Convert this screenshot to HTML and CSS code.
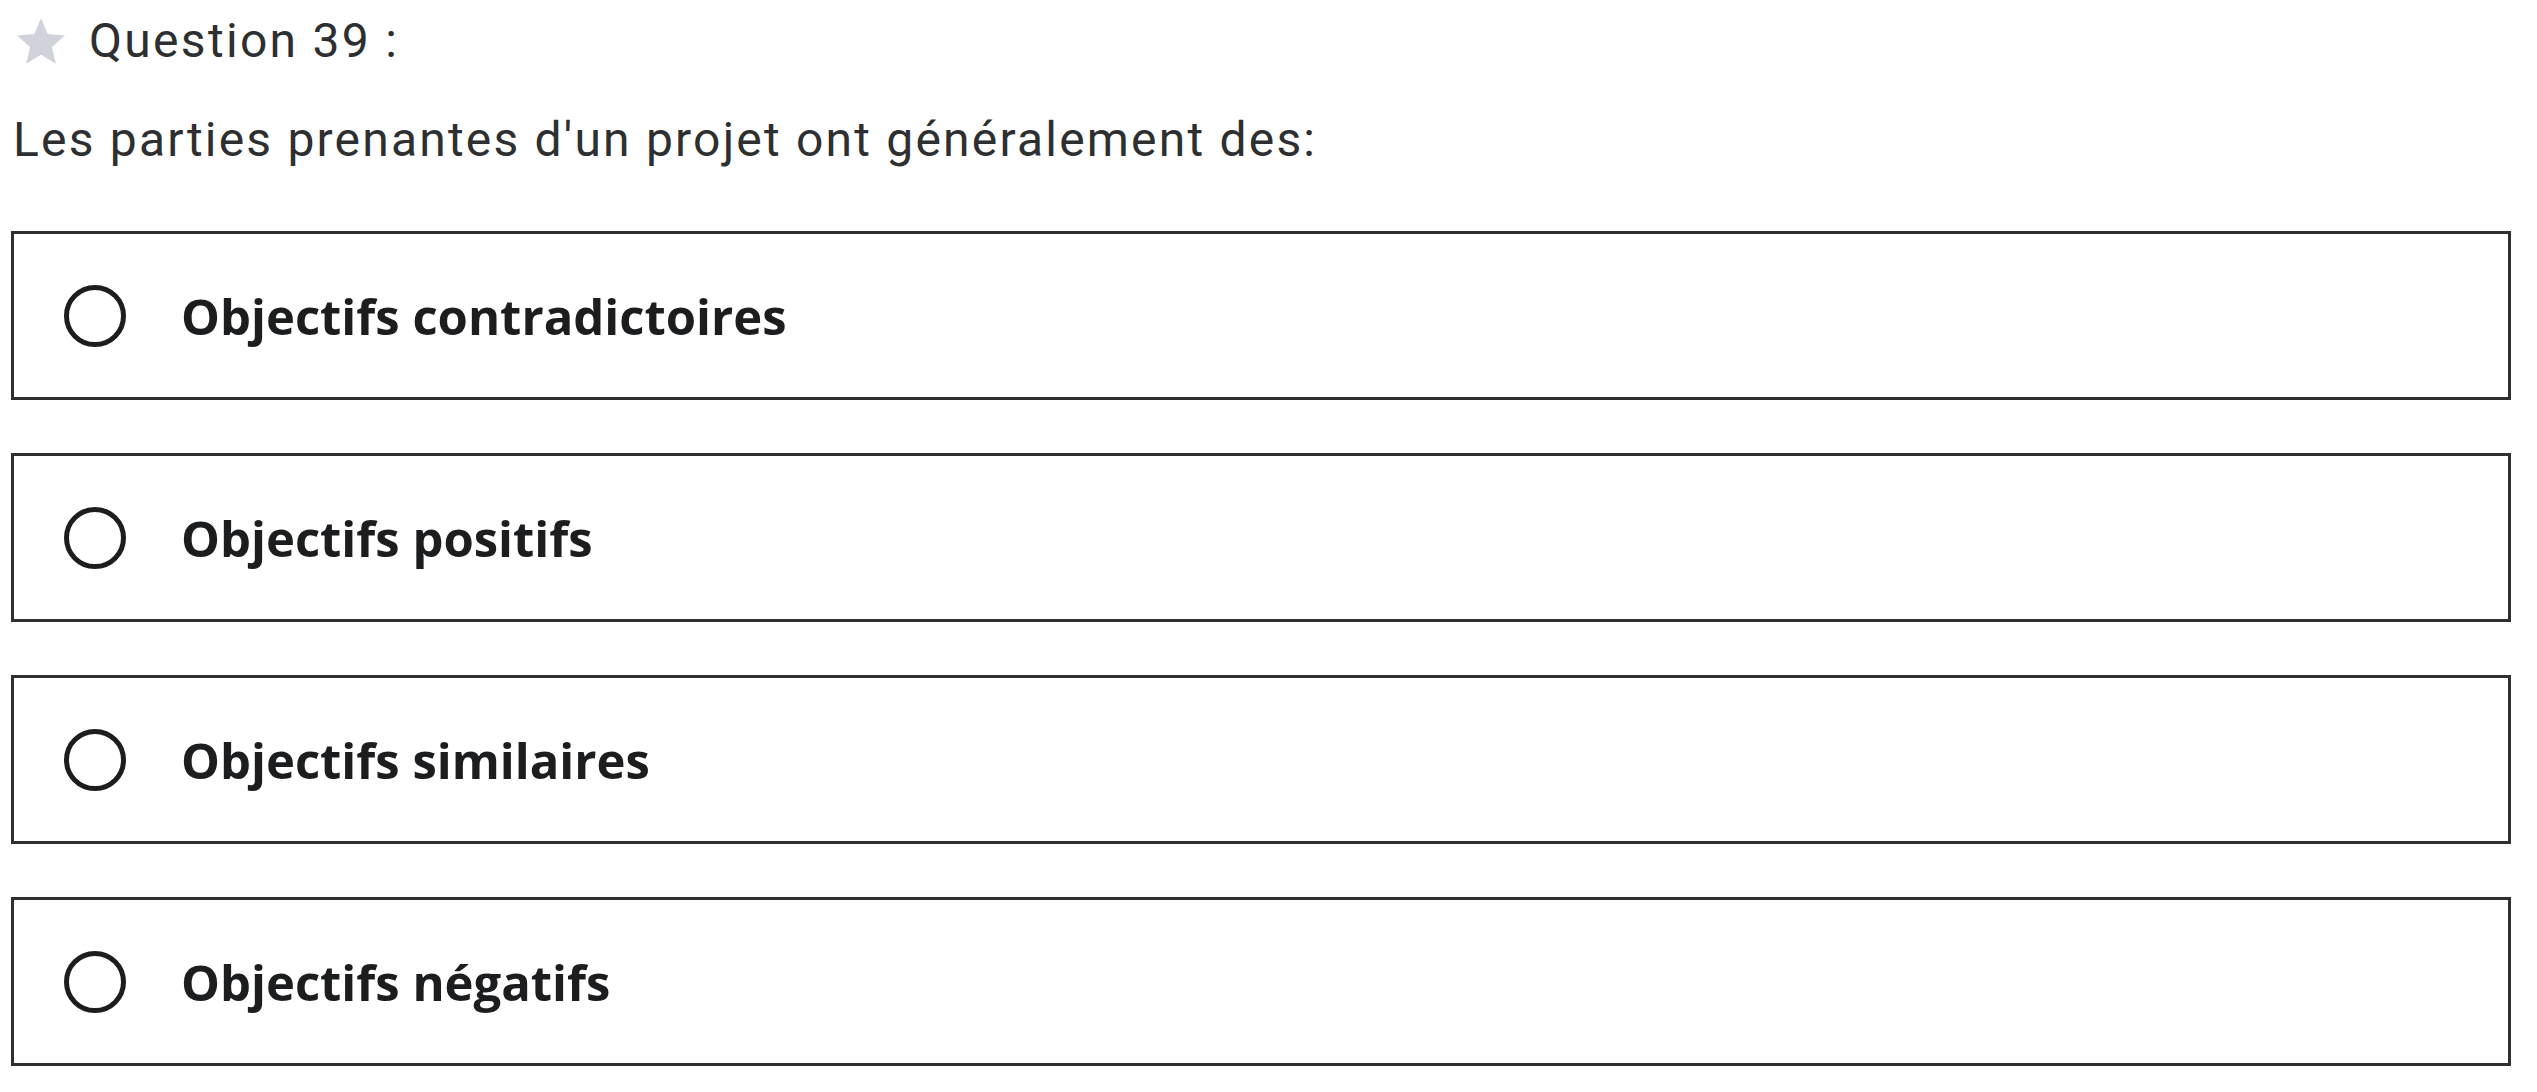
FILE: index.html
```html
<!DOCTYPE html>
<html lang="fr">
<head>
<meta charset="utf-8">
<title>Question 39</title>
<link rel="stylesheet" href="styles.css">
</head>
<body>
<div class="page">
  <div class="q-header">
    <svg class="star" viewBox="2 2 20 19" aria-hidden="true"><path d="M12 17.27L18.18 21l-1.64-7.03L22 9.24l-7.19-.61L12 2 9.19 8.63 2 9.24l5.46 4.73L5.82 21z"/></svg>
    <span class="q-title">Question 39 :</span>
  </div>
  <p class="q-text">Les parties prenantes d'un projet ont généralement des:</p>
  <div class="options">
    <div class="option"><span class="radio"></span><span class="label">Objectifs contradictoires</span></div>
    <div class="option"><span class="radio"></span><span class="label">Objectifs positifs</span></div>
    <div class="option"><span class="radio"></span><span class="label">Objectifs similaires</span></div>
    <div class="option"><span class="radio"></span><span class="label">Objectifs négatifs</span></div>
  </div>
</div>
</body>
</html>
```
FILE: styles.css
```css
html, body {
  margin: 0;
  padding: 0;
  background: #ffffff;
}

.page {
  padding: 13px 26px 0 11px;
  font-family: Roboto, "Liberation Sans", sans-serif;
  color: #2d2f31;
}

.q-header {
  display: flex;
  align-items: center;
  height: 56px;
}

.star {
  width: 48px;
  height: 46px;
  margin-left: 6px;
  margin-right: 24px;
  fill: #d1d3da;
}

.q-title {
  font-size: 48px;
  line-height: 56px;
  letter-spacing: 2.3px;
}

.q-text {
  margin: 43px 0 0 2px;
  font-size: 48px;
  line-height: 56px;
  letter-spacing: 2.2px;
}

.options {
  display: flex;
  flex-direction: column;
  gap: 53px;
  margin-top: 63px;
}

.option {
  display: flex;
  align-items: center;
  height: 169px;
  box-sizing: border-box;
  border: 3px solid #2d2f31;
  padding-left: 50px;
}

.radio {
  width: 62px;
  height: 62px;
  box-sizing: border-box;
  border: 5px solid #1c1d1f;
  border-radius: 50%;
  flex: none;
}

.label {
  margin-left: 55px;
  font-family: "Open Sans", "Liberation Sans", sans-serif;
  font-weight: 700;
  font-size: 49px;
  color: #1c1d1f;
}
```
